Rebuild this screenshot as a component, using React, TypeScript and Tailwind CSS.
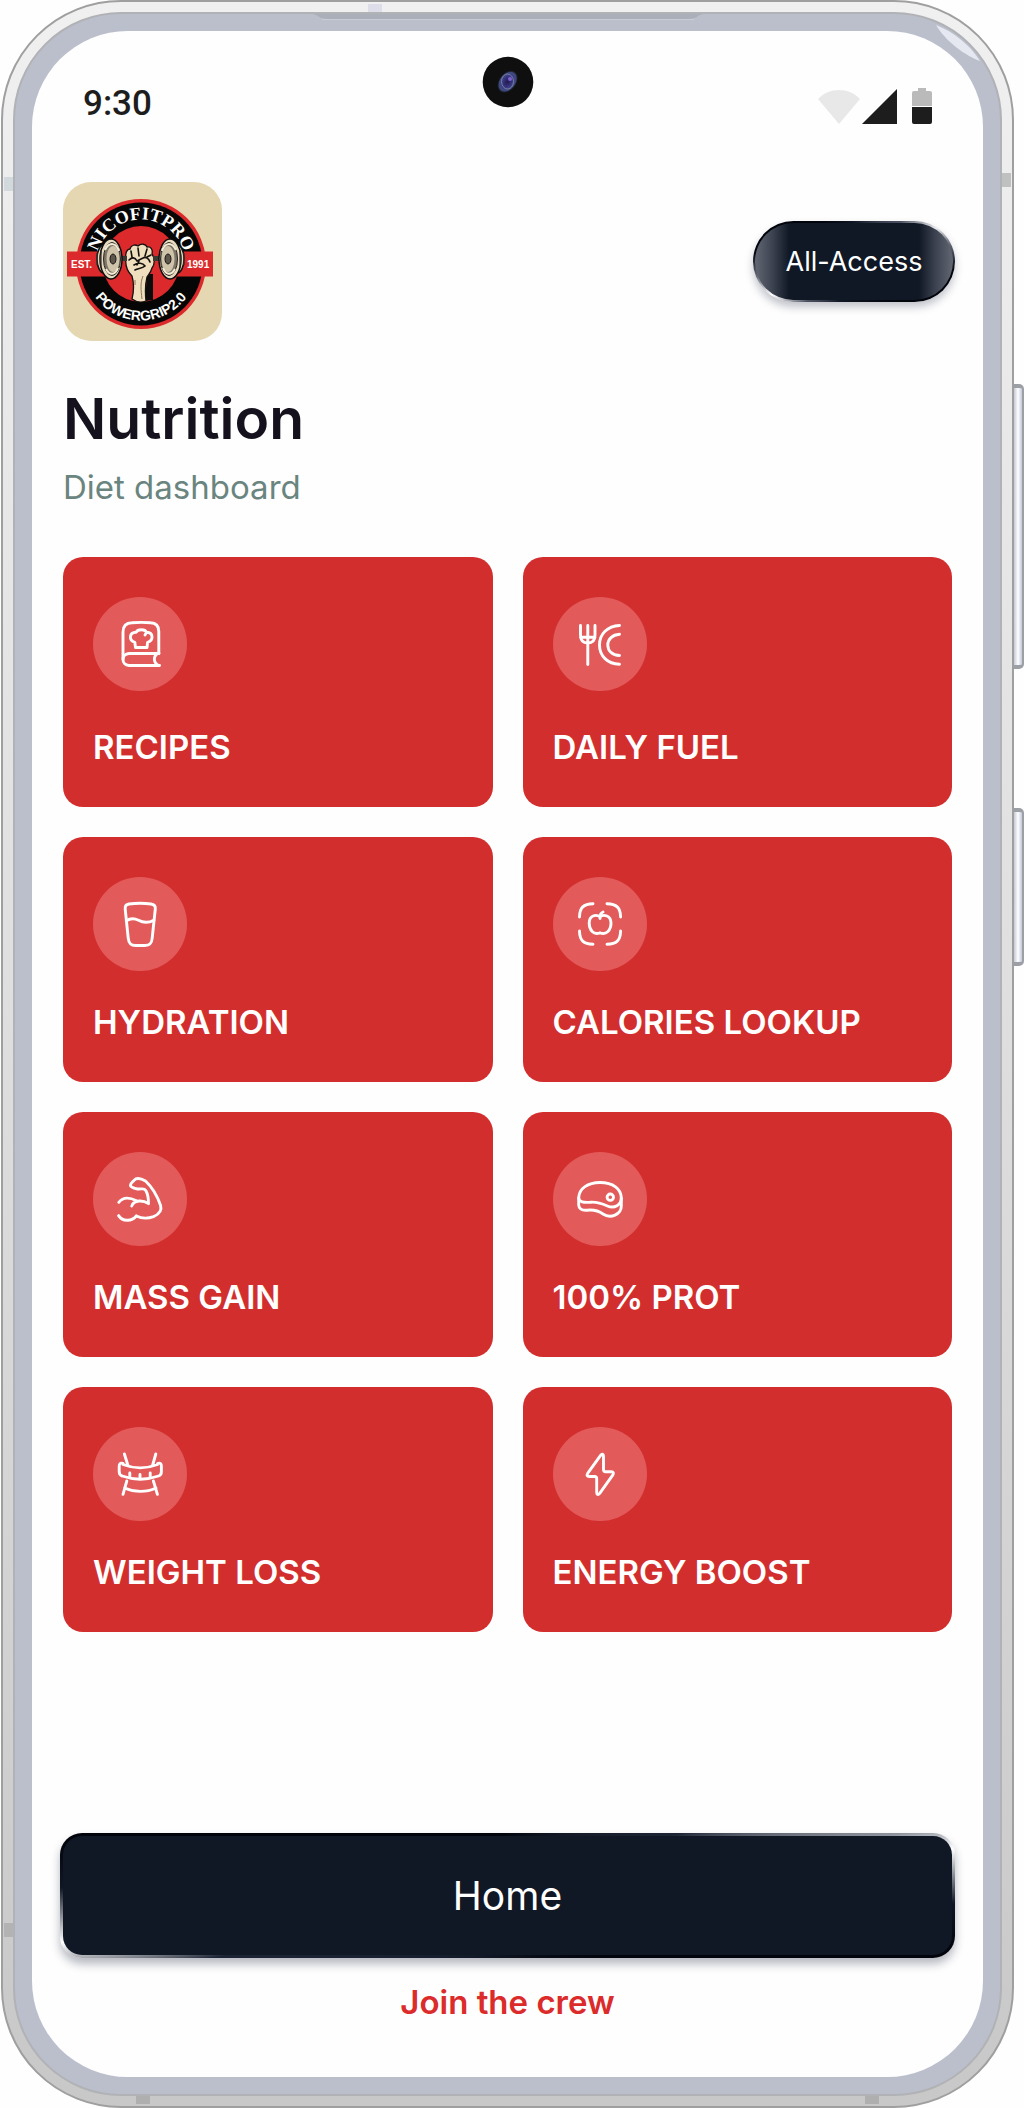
import type { ReactNode } from "react";

const icons: Record<string, ReactNode> = {
  recipes: (
    <>
      <path d="M30 62V35C30 29 33 26 39 25.8C45 25.3 52 25.3 57.5 25.8C63 26 65.8 29 65.8 34.5V56.5" />
      <path d="M66 56.5H36C28 57 28 68.3 36 68.5H66.5" />
      <path d="M65 56.5C60 59 60 66 66 68.5" />
      <path d="M42.5 50.5H54L54.6 45.3C60.8 43.5 60.5 35.5 53.6 35.3C52 31.8 44.6 31.8 43 35.3C36 35.5 35.6 43.5 41.8 45.3ZM53.6 35.3L52 38" />
    </>
  ),
  fuel: (
    <>
      <path d="M27.5 28.5V38C27.5 43.5 30.5 46 34.8 46S42 43.5 42 38V28.5M34.8 28.5V67.5M27.5 40.2H42" />
      <path d="M66.5 28.5C54.5 29 46.5 37 46.5 48S54.5 66.8 66.5 67.3" />
      <path d="M66.5 37.3C59.5 37.8 54.8 42 54.8 48S59.5 58 66.5 58.5" />
    </>
  ),
  water: (
    <>
      <path d="M36 27C43 26 51 26 58 27C61.5 27.5 62.6 29 62.3 32L59.2 61C58.8 66.5 57 68.5 52 68.5H42.5C37.5 68.5 35.8 66.5 35.2 61L32.2 32C31.9 29 33 27.5 36 27Z" />
      <path d="M33.3 43.8C38 40.8 41.5 41.3 45.5 43.3C50.5 46 55.5 46 60.8 43.3" />
    </>
  ),
  scan: (
    <>
      <path d="M40 26.7C30.5 27 26.7 30.5 26.5 40M54 26.7C63.5 27 67.4 30.5 67.6 40M26.5 54C26.7 63.5 30.5 67 40 67.3M54 67.3C63.5 67 67.4 63.5 67.6 54" />
      <path d="M47 39.8C43 37 36.3 38.5 36.2 46C36.2 53 40.5 58.2 47 55.8C53.5 58.2 58 53 58 46C57.8 38.5 51 37 47 39.8ZM47 41.5C46.8 38.5 47.5 36 50 35" />
    </>
  ),
  muscle: (
    <>
      <path d="M25.8 50.3C29.5 45.5 36 45 43.5 48.8M38.8 54C39.5 51.3 42 49.5 46 49C49.5 48.8 52.5 49.5 55.5 51.6C55.5 46 54.8 42 52.8 38.5C51 35.5 48.5 37.5 44.5 37C40.5 36 37.5 35 37.4 33.3C37.4 31.5 39.3 30.2 41 28.4C44 25 49 27 52.5 29C59.5 35.5 64.5 44.5 67.6 53.5C69.3 59.5 65.5 62.5 60.5 64.6C54.5 66.8 48.5 66.4 43.3 64" />
      <path d="M25.6 63.6C29.5 69.5 38.5 70 43.3 64" />
    </>
  ),
  steak: (
    <>
      <path d="M25.7 46C26 36 35 30.7 47 30.5C60 30.5 68.3 37 68.3 46C68.3 53 61.5 57 54.5 54C49.5 51.8 45 49.8 38 50.2C30.5 50.8 26 50 25.7 46Z" />
      <path d="M25.7 46V53C26 57 29 58.5 34 58.2C41 57.5 46 59 50 62C57.5 67 68.3 62.5 68.3 54V46" />
      <circle cx="57.3" cy="45.2" r="3.2" />
    </>
  ),
  waist: (
    <>
      <path d="M31.4 27L34.8 38M62.8 27L59.7 38M33.8 54L30 67.3M60.4 54L64.4 67.3M31.5 61C41.5 65.5 53.5 65.5 63 61" />
      <path d="M30 36.5C27 35.5 26.2 37 26.2 39.5V44.5C26.2 47 27 48.3 29.2 49C41 53.2 53.5 53.2 65.5 49C67.6 48.3 68.4 47 68.4 44.5V39.5C68.4 37 67.4 35.5 64.5 36.5M30 37.5C41 41.8 53.5 41.8 64.5 37.5" />
      <path d="M36.8 46V50M47 47.5V51.5M57.2 46V50" />
    </>
  ),
  bolt: (
    <path d="M47.6 28.3L34.8 46.2C33.6 48.3 34 49.5 36.2 49.5H41.6C43 49.5 43.7 50.2 43.7 51.7V65.3C43.7 67.8 45.2 68.2 46.7 66.3L59.7 48.2C61 46 60.5 44.8 58.2 44.8H52.6C51.2 44.8 50.5 44.1 50.5 42.6V29.2C50.5 26.8 49 26.4 47.6 28.3Z" />
  ),
};

const tiles = [
  { label: "RECIPES", icon: "recipes" },
  { label: "DAILY FUEL", icon: "fuel" },
  { label: "HYDRATION", icon: "water" },
  { label: "CALORIES LOOKUP", icon: "scan" },
  { label: "MASS GAIN", icon: "muscle" },
  { label: "100% PROT", icon: "steak" },
  { label: "WEIGHT LOSS", icon: "waist" },
  { label: "ENERGY BOOST", icon: "bolt" },
];

function Tile({ label, icon }: { label: string; icon: string }) {
  return (
    <button
      type="button"
      className="flex min-w-0 flex-col items-start justify-between rounded-[20px] bg-[#d32e2e] px-[30px] py-10 text-left text-white"
    >
      <span className="size-[94px] rounded-full bg-[#e35a5a]">
        <svg
          viewBox="0 0 94 94"
          className="size-full"
          fill="none"
          stroke="currentColor"
          strokeWidth="2.9"
          strokeLinecap="round"
          strokeLinejoin="round"
          aria-hidden="true"
        >
          {icons[icon]}
        </svg>
      </span>
      <span className="text-[33px] leading-10 font-semibold whitespace-nowrap">{label}</span>
    </button>
  );
}

function Plate() {
  return (
    <>
      <ellipse cx="-7" rx="7" ry="14" fill="#e9dcc0" stroke="#111" strokeWidth="1.5" />
      <ellipse rx="11" ry="20" fill="#e6dabf" stroke="#0c0c0c" strokeWidth="1.5" />
      <ellipse cx="1" rx="8.5" ry="16.5" fill="#7d7568" stroke="#2b2722" strokeWidth="1" />
      <ellipse cx="2" rx="6.5" ry="13" fill="#cfc3a9" />
      <path d="M-6-9C-2-17 5-17 8-8M-5 10C-2 16 4 17 7 9" fill="none" stroke="#f6ecd6" strokeWidth="2" />
      <ellipse cx="2" rx="3" ry="5" fill="#5d564b" stroke="#1c1916" />
      <path d="M-14-6V6M-10-9V9" stroke="#3a352e" strokeWidth="1.2" />
    </>
  );
}

function Logo() {
  return (
    <svg viewBox="0 0 159 159" className="size-[159px] shrink-0" role="img" aria-label="NicoFitPro Powergrip 2.0">
      <rect width="159" height="159" rx="28" fill="#e5d7b1" />
      <circle cx="78" cy="82" r="65" fill="#dc2a2c" />
      <circle cx="78" cy="82" r="61.5" fill="#060606" />
      <circle cx="78" cy="82" r="38" fill="#dc2a2c" />
      <rect x="4" y="69.5" width="146" height="25" fill="#dc2a2c" />
      <path id="arc-top" d="M33.5 82A44.5 44.5 0 0 1 122.5 82" fill="none" />
      <path id="arc-bottom" d="M21.5 82A56.5 56.5 0 0 0 134.5 82" fill="none" />
      <text
        fill="#fff"
        fontFamily="Liberation Serif, serif"
        fontWeight="700"
        fontSize="18"
        textAnchor="middle"
      >
        <textPath href="#arc-top" startOffset="50%">
          NICOFITPRO
        </textPath>
      </text>
      <text
        fill="#fff"
        fontFamily="Liberation Sans, sans-serif"
        fontWeight="700"
        fontSize="14"
        textAnchor="middle"
      >
        <textPath href="#arc-bottom" startOffset="50%">
          POWERGRIP2.0
        </textPath>
      </text>
      <path d="M84 92H90V118L82 119Z" fill="#0b0b0b" />
      <path
        d="M69 94C64 89 62 83 63 76C62 71 64 67 67 67C68 63 72 62 75 64C78 61 83 62 84 65C88 64 90 68 89 72C92 76 92 82 89 86C88 90 86 92 84 95C82 103 82 110 83 119C78 121 73 120 69 117C71 109 71 101 69 94Z"
        fill="#efdfbf"
        stroke="#15110e"
        strokeWidth="1.3"
      />
      <path
        d="M66 78C69 75 72 75 74 79L80 76C83 74 86 77 87 80M75 66L76 74M84 67L82 74M68 69L69 75M71 83C75 80 80 81 82 84C79 87 75 86 72 88M88 73L84 75M76 79L74 83"
        fill="none"
        stroke="#15110e"
        strokeWidth="1.6"
        strokeLinecap="round"
      />
      <path d="M80 94C77 101 78 108 79 117M72 98V103" fill="none" stroke="#8c7657" strokeWidth="1" />
      <path d="M55 76.5H64M90 76.5H99" stroke="#3b3834" strokeWidth="5" />
      <g transform="translate(48 77)">
        <Plate />
      </g>
      <g transform="translate(107 77) scale(-1 1)">
        <Plate />
      </g>
      <g fill="#fff" fontFamily="Liberation Sans, sans-serif" fontWeight="700" fontSize="10">
        <text x="8" y="86">
          EST.
        </text>
        <text x="124" y="86">
          1991
        </text>
      </g>
    </svg>
  );
}

function StatusBar() {
  return (
    <div className="mt-[49px] flex h-12 items-center justify-between pr-[50px] pl-[51px]">
      <time className="font-[Roboto,sans-serif] text-[35px] leading-10 font-medium text-[#1d1d1d]">9:30</time>
      <svg viewBox="0 0 116 40" className="h-10 w-[116px]" aria-hidden="true">
        <path d="M1 15C12 3 32 3 43 15L22 40Z" fill="#e8e8e8" />
        <path d="M44 41L80 5V41Z" fill="#1d1d1d" />
        <path d="M95 22V9Q95 7 97 7H101V4H109V7H113Q115 7 115 9V22Z" fill="#bababa" />
        <path d="M95 23H115V38Q115 40 113 40H97Q95 40 95 38Z" fill="#1d1d1d" />
      </svg>
    </div>
  );
}

export default function App() {
  return (
    <div className="flex min-h-screen bg-[#fefefe] pr-[10px] pl-px font-[Inter,sans-serif]">
      <div className="relative flex flex-1 rounded-[120px] border-2 border-[#9f9f9f] bg-linear-to-b from-[#f0f0f0] via-[#dedede] to-[#c8c8c8] p-[10px]">
        {/* side keys */}
        <span className="absolute top-[382px] left-full ml-[2px] h-[285px] w-[10px] rounded-r-[5px] border-y-4 border-r-2 border-[#9c9fa6] bg-linear-to-r from-[#c5c9d8] via-white to-[#c5c9d8]" />
        <span className="absolute top-[806px] left-full ml-[2px] h-[158px] w-[10px] rounded-r-[5px] border-y-4 border-r-2 border-[#9c9fa6] bg-linear-to-r from-[#c5c9d8] via-white to-[#c5c9d8]" />
        {/* antenna bands */}
        <span className="absolute top-[2px] left-[365px] h-2 w-[14px] bg-[#dddeea]" />
        <span className="absolute top-[175px] left-[1px] h-[14px] w-[9px] bg-[#d2d9dc]" />
        <span className="absolute top-[171px] right-[1px] h-[14px] w-[9px] bg-[#bfc0c0]" />
        <span className="absolute bottom-[169px] left-[1px] h-[14px] w-[9px] bg-[#b3b3b4]" />
        <span className="absolute bottom-[2px] left-[133px] h-2 w-[14px] bg-[#afafb0]" />
        <span className="absolute right-[133px] bottom-[2px] h-2 w-[14px] bg-[#afafb0]" />

        <div className="relative flex flex-1 overflow-hidden rounded-[108px] border-2 border-[#b1b2b5] bg-[#bbbfcc] p-[17px]">
          <svg viewBox="0 0 392 6" className="absolute top-0 left-1/2 h-[6px] w-[392px] -translate-x-1/2" aria-hidden="true">
            <path d="M0 0H392C384 1 386 5 376 5H16C6 5 8 1 0 0Z" fill="#abafb9" />
            <path d="M10 5.5H382" stroke="#c9ccd7" />
          </svg>
          <svg viewBox="0 0 44 36" className="absolute top-[11px] right-[20px] h-9 w-11" aria-hidden="true">
            <path d="M0 0C18 7 34 20 44 36C30 31 10 17 0 0Z" fill="#e6e8f1" />
          </svg>

          <main className="relative flex min-w-0 flex-1 flex-col rounded-[96px] bg-[#fefefe]">
            {/* camera */}
            <svg viewBox="0 0 52 52" className="absolute top-[25px] left-1/2 size-[52px] -translate-x-1/2" aria-hidden="true">
              <defs>
                <radialGradient id="lens">
                  <stop offset="0" stopColor="#221850" />
                  <stop offset="0.55" stopColor="#3b3c86" />
                  <stop offset="0.8" stopColor="#5063a8" stopOpacity="0.7" />
                  <stop offset="1" stopColor="#0f0f10" stopOpacity="0" />
                </radialGradient>
              </defs>
              <circle cx="26" cy="26" r="25.3" fill="#0f0f10" />
              <ellipse cx="25.5" cy="26" rx="9" ry="13" fill="url(#lens)" transform="rotate(38 26 26)" />
              <ellipse cx="25.5" cy="25.5" rx="6" ry="7.5" fill="none" stroke="#8a8da8" strokeWidth="0.8" />
              <circle cx="28" cy="23" r="2" fill="#7c63cf" />
            </svg>

            <StatusBar />

            <header className="mt-[54px] flex items-center justify-between pr-7 pl-[31px]">
              <Logo />
              <button
                type="button"
                className="flex h-[81px] w-[202px] items-center justify-center rounded-full border-2 border-transparent text-[27px] leading-9 text-white shadow-[0_5px_9px_rgba(16,23,50,0.26)] [background:linear-gradient(90deg,#626773_0,#3b414f_18px,#101725_34px,#101725_calc(100%-34px),#3b414f_calc(100%-18px),#626773_100%)_padding-box,conic-gradient(#101725_0deg,#4b5160_50deg,#e8e9ec_68deg,#626773_80deg,#02040c_95deg,#02040c_130deg,#101725_200deg,#4b5160_230deg,#ffffff_248deg,#626773_262deg,#02040c_275deg,#02040c_320deg,#101725_360deg)_border-box]"
              >
                All-Access
              </button>
            </header>

            <section className="mt-[42px] px-[31px]">
              <h1 className="text-[57px] leading-[72px] font-semibold text-[#15121e]">Nutrition</h1>
              <p className="mt-3 text-[33px] leading-10 text-[#6a857f]">Diet dashboard</p>
            </section>

            <nav
              aria-label="Diet dashboard"
              className="mt-[50px] grid grid-cols-2 grid-rows-[minmax(250px,auto)_repeat(3,minmax(245px,auto))] gap-[30px] px-[31px]"
            >
              {tiles.map((tile) => (
                <Tile key={tile.label} {...tile} />
              ))}
            </nav>

            <footer className="mt-auto flex flex-col items-center px-7 pt-10 pb-[55px]">
              <button
                type="button"
                className="h-[125px] w-full rounded-[22px] border-3 border-transparent text-[39px] leading-[48px] text-white shadow-[0_6px_10px_rgba(16,23,50,0.3)] [background:linear-gradient(#101725,#101725)_padding-box,conic-gradient(#02060f_0deg,#1c2333_70deg,#8d929c_81deg,#ffffff_84deg,#101725_91deg,#02040c_97deg,#02040c_120deg,#101725_200deg,#1c2333_258deg,#ffffff_264deg,#101725_271deg,#02040c_277deg,#02040c_360deg)_border-box]"
              >
                Home
              </button>
              <a href="#join" className="mt-6 text-[33px] leading-10 font-semibold text-[#dc2b2b]">
                Join the crew
              </a>
            </footer>
          </main>
        </div>
      </div>
    </div>
  );
}
